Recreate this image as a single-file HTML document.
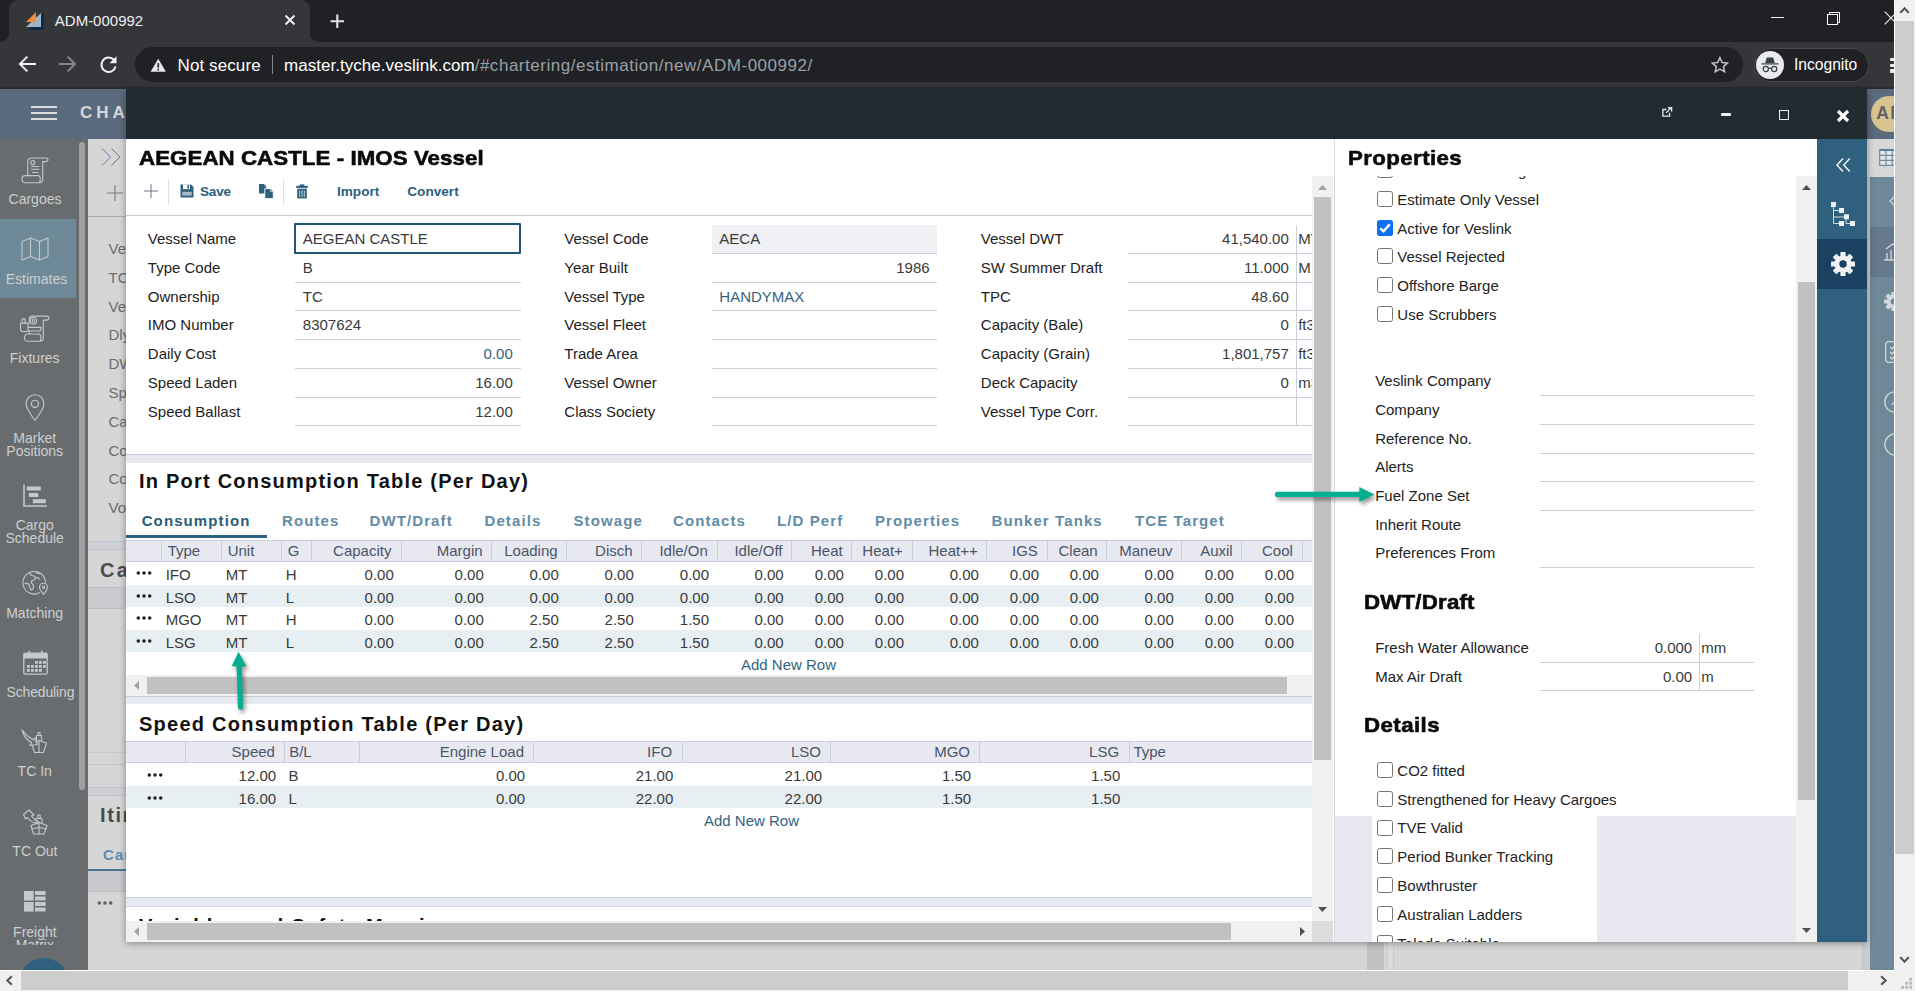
<!DOCTYPE html>
<html>
<head>
<meta charset="utf-8">
<title>ADM-000992</title>
<style>
*{box-sizing:border-box;margin:0;padding:0}
html,body{width:1915px;height:991px;overflow:hidden;background:#d6d6d6;font-family:"Liberation Sans",sans-serif;font-size:15px;color:#222}
.abs,.abs *{position:absolute}
.abs{left:0;top:0}
.t{white-space:pre;line-height:1}
svg{position:absolute;overflow:visible}
/* browser chrome */
#tabstrip{left:0;top:0;width:1894px;height:42px;background:#202124}
#tab{left:9px;top:0;width:301px;height:42px;background:#35363a;border-radius:9px 9px 0 0}
#addr{left:0;top:41px;width:1894px;height:48px;background:#35363a}
#pill{left:135px;top:6px;width:1608px;height:35px;border-radius:18px;background:#202124}
#incog{left:1754.3px;top:6.5px;width:115px;height:34px;border-radius:17px;background:#202124;border:1px solid #46484c}
/* app */
#apphead{left:0;top:89px;width:1894px;height:50px;background:#5a6b7d}
#side{left:0;top:139px;width:88px;height:831px;background:#696c6e;overflow:hidden}
#side .t{color:#cdcfd0;font-size:14px;text-align:center;width:88px;left:0}
#bg{left:88px;top:139px;width:1806px;height:831px;background:#d6d6d6;overflow:hidden}
/* modal */
#modal{left:126px;top:89px;width:1741px;height:853px;background:#fff;box-shadow:0 1px 7px rgba(0,0,0,.4)}
#mtitle{left:0;top:0;width:1741px;height:50px;background:#222a32}
#mright{left:1691px;top:50px;width:50px;height:803px;background:#2f607d}

.h1{font-size:21px;font-weight:bold;color:#0a0a0a;-webkit-text-stroke:.6px #0a0a0a;transform:scaleX(1.061);transform-origin:0 0}
.h2{font-size:20px;font-weight:bold;color:#111}
.tb{font-size:13.6px;font-weight:bold;color:#2c5f7c}
.v{color:#3a3a3a}
.lnk{color:#34647f}
.th{color:#4a5568}
.tab{font-size:15px;font-weight:bold;letter-spacing:1.1px;color:#628ca6}
.tab.act{color:#2a5d7a}
.dots{font-size:19px;letter-spacing:-1px;color:#222;line-height:1}
#lp .t{font-size:15px}
#lp .t.h1{font-size:21px;font-weight:bold;color:#0a0a0a;-webkit-text-stroke:.6px #0a0a0a;transform:scaleX(1.061);transform-origin:0 0}#lp .t.h2{font-size:20px}#lp .t.tb{font-size:13.6px}#lp .t.dots{font-size:19px}

.h3{font-size:21px;font-weight:bold;color:#0a0a0a;-webkit-text-stroke:.6px #0a0a0a;transform:scaleX(1.06);transform-origin:0 0}
#rp .t{font-size:15px}
#rp .t.h3{font-size:21px;font-weight:bold;color:#0a0a0a;-webkit-text-stroke:.6px #0a0a0a;transform:scaleX(1.06);transform-origin:0 0}
/* scrollbars */
#vsb{left:1894px;top:0;width:21px;height:971px;background:#f0f0f0;border-left:1px solid #fff}
#hsb{left:0;top:970px;width:1915px;height:21px;background:#f0f0f0;border-top:1px solid #fff}
</style>
</head>
<body>
<div class="abs" id="root">

<!-- ===== browser chrome ===== -->
<div id="tabstrip">
  <div id="tab"></div>
  <div style="left:1px;top:33px;width:8px;height:9px;background:radial-gradient(circle at 0 0,#202124 8px,#35363a 8.5px)"></div>
  <div style="left:310px;top:33px;width:8px;height:9px;background:radial-gradient(circle at 100% 0,#202124 8px,#35363a 8.5px)"></div>
  <!-- favicon -->
  <svg style="left:24px;top:11px" width="22" height="20" viewBox="0 0 22 20">
    <polygon points="20,1 20,19 4,19" fill="#0f2a4a"/>
    <polygon points="17,2 17,16 2,16" fill="#9fb4c4"/>
    <polygon points="12,1 12,11 2,11" fill="#f08a3c"/>
  </svg>
  <div class="t" style="left:54.8px;top:13px;font-size:15px;color:#eceef0">ADM-000992</div>
  <svg style="left:284px;top:14px" width="12" height="12" viewBox="0 0 12 12"><path d="M1.5 1.5L10.5 10.5M10.5 1.5L1.5 10.5" stroke="#f1f3f4" stroke-width="1.9" fill="none"/></svg>
  <svg style="left:330.3px;top:13.5px" width="14.6" height="14.6" viewBox="0 0 14 14"><path d="M7 0.5V13.5M0.5 7H13.5" stroke="#e2e4e6" stroke-width="2" fill="none"/></svg>
  <!-- window controls -->
  <div style="left:1771px;top:17px;width:13px;height:1px;background:#f1f1f1"></div>
  <svg style="left:1826px;top:11px" width="15" height="15" viewBox="0 0 15 15"><path d="M3.5 3.5V1.5H13.5V11.5H11.5" stroke="#fff" stroke-width="1" fill="none"/><rect x="1.5" y="3.5" width="10" height="10" stroke="#fff" stroke-width="1" fill="none"/></svg>
  <svg style="left:1884px;top:11px" width="14" height="14" viewBox="0 0 14 14"><path d="M0.7 0.7L13.3 13.3M13.3 0.7L0.7 13.3" stroke="#f1f1f1" stroke-width="1.1" fill="none"/></svg>
</div>
<div id="addr">
  <div style="left:0;top:0;width:2px;height:.8px;background:#202124"></div>
  <div style="left:318px;top:0;width:1576px;height:.8px;background:#202124"></div>
  <div style="left:0;top:46px;width:1894px;height:2px;background:#2a2b2e"></div>
  <!-- nav icons -->
  <svg style="left:18px;top:14px" width="19" height="18" viewBox="0 0 19 18"><path d="M18 9H2.5M9.3 1.6L2 9L9.3 16.4" stroke="#f1f3f4" stroke-width="2" fill="none"/></svg>
  <svg style="left:58px;top:14px" width="19" height="18" viewBox="0 0 19 18"><path d="M1 9H16.5M9.7 1.6L17 9L9.7 16.4" stroke="#85888c" stroke-width="2" fill="none"/></svg>
  <svg style="left:99px;top:14px" width="19" height="19" viewBox="0 0 19 19"><path d="M15.2 5.2A7.2 7.2 0 1 0 16.6 11.5" stroke="#f1f3f4" stroke-width="2" fill="none"/><polygon points="17.5,1.2 17.5,8.2 10.5,8.2" fill="#f1f3f4"/></svg>
  <div id="pill"></div>
  <svg style="left:149.5px;top:17px" width="16.5" height="14.6" viewBox="0 0 18 16"><path d="M9 0.8L17.4 15.2H0.6Z" fill="#e8eaed"/><rect x="8.1" y="5.6" width="1.8" height="5" fill="#202124"/><rect x="8.1" y="11.8" width="1.8" height="1.8" fill="#202124"/></svg>
  <div class="t" style="left:177.5px;top:16px;font-size:17px;letter-spacing:.1px;color:#fff">Not secure</div>
  <div style="left:271.5px;top:14px;width:1.5px;height:19px;background:#84878b"></div>
  <div class="t" style="left:284px;top:16px;font-size:17px;letter-spacing:.53px;color:#9aa0a6"><span style="position:static;color:#fff;letter-spacing:.03px">master.tyche.veslink.com</span>/#chartering/estimation/new/ADM-000992/</div>
  <svg style="left:1711px;top:14.6px" width="17.8" height="16.9" viewBox="0 0 20 19"><path d="M10 1.8L12.5 7.3L18.5 7.9L14 11.9L15.3 17.8L10 14.7L4.7 17.8L6 11.9L1.5 7.9L7.5 7.3Z" stroke="#bdc1c6" stroke-width="1.7" fill="none" stroke-linejoin="miter"/></svg>
  <div id="incog"></div>
  <div style="left:1756px;top:9.7px;width:28px;height:28px;border-radius:14px;background:#e8eaed"></div>
  <svg style="left:1760px;top:13.7px" width="20" height="20" viewBox="0 0 20 20"><path d="M5.2 8L6.8 2.6H13.2L14.8 8Z" fill="#3c4043"/><rect x="1.5" y="8.3" width="17" height="1.2" fill="#3c4043"/><circle cx="5.8" cy="14" r="2.6" stroke="#3c4043" stroke-width="1.2" fill="none"/><circle cx="14.2" cy="14" r="2.6" stroke="#3c4043" stroke-width="1.2" fill="none"/><path d="M8.4 13.6Q10 12.6 11.6 13.6" stroke="#3c4043" stroke-width="1.1" fill="none"/></svg>
  <div class="t" style="left:1794px;top:16px;font-size:15.6px;color:#fff">Incognito</div>
  <div style="left:1890px;top:16.6px;width:4px;height:3.4px;background:#e8eaed;border-radius:1px 0 0 1px"></div>
  <div style="left:1890px;top:22.5px;width:4px;height:3.4px;background:#e8eaed;border-radius:1px 0 0 1px"></div>
  <div style="left:1890px;top:28.4px;width:4px;height:3.4px;background:#e8eaed;border-radius:1px 0 0 1px"></div>
</div>

<!-- ===== app header ===== -->
<div id="apphead">
  <div style="left:31px;top:17px;width:26px;height:2px;background:#dcdddf"></div>
  <div style="left:31px;top:23px;width:26px;height:2px;background:#d9dbdd"></div>
  <div style="left:31px;top:29px;width:26px;height:2px;background:#dcdddf"></div>
  <div class="t" style="left:80px;top:15px;font-size:17px;font-weight:bold;letter-spacing:3.95px;color:#d6d8db">CHARTERING</div>
  <!-- avatar (right of modal) -->
  <div style="left:1871px;top:6.7px;width:36.5px;height:36.5px;border-radius:19px;background:#d8c48e"></div>
  <div class="t" style="left:1876.3px;top:16px;font-size:17.5px;font-weight:bold;letter-spacing:1.4px;color:#626266">AD</div>
</div>

<!-- ===== sidebar ===== -->
<div id="side">
  <div style="left:0;top:80px;width:76px;height:79px;background:#6e8998"></div>
  <div style="left:79px;top:2.7px;width:6px;height:648px;border-radius:3px;background:#a1a1a1"></div>
  <div id="sideitems" style="left:0;top:0;width:88px;height:806px;overflow:hidden">
  <!-- Cargoes -->
  <svg style="left:21px;top:18px" width="28" height="27" viewBox="0 0 28 27"><g stroke="#c6c8c9" stroke-width="1.1" fill="none" stroke-linejoin="round" stroke-linecap="round"><path d="M6.8 18.6V4.5Q6.8 1 10.3 1H24.5Q27 1 27 2.8Q27 4.6 24.5 4.6H21.7V22.2Q21.7 25.7 18.2 25.7H4.5Q1 25.7 1 22.2Q1 18.6 4.5 18.6H17.5Q19.3 19.2 19.3 22.2Q19.3 25 17.8 25.7"/><path d="M10.5 9.5H18M10.5 12.3H18M11.5 15.5H17"/><circle cx="11.8" cy="5.6" r="2"/></g></svg>
  <div class="t" style="top:53px;left:-9px">Cargoes</div>
  <!-- Estimates -->
  <svg style="left:21px;top:98px" width="28" height="24" viewBox="0 0 28 24"><g stroke="#c6c8c9" stroke-width="1.1" fill="none" stroke-linejoin="round" stroke-linecap="round"><path d="M1 4.5L9.5 1L18.5 4.5L27 1V19.5L18.5 23L9.5 19.5L1 23Z"/><path d="M9.5 1V19.5M18.5 4.5V23"/></g></svg>
  <div class="t" style="top:133px;left:-7.5px">Estimates</div>
  <!-- Fixtures -->
  <svg style="left:20px;top:176px" width="30" height="28" viewBox="0 0 30 28"><g stroke="#c6c8c9" stroke-width="1.1" fill="none" stroke-linejoin="round" stroke-linecap="round"><path d="M9.3 8V4.4Q9.3 1.1 12.6 1.1H26.5Q28.9 1.1 28.9 3.1Q28.9 5.1 26.5 5.1H23.3V22.8Q23.3 26.3 19.8 26.3H8Q4.5 26.3 4.5 22.7Q4.5 19 8 19H19Q21 19.6 21 22.7Q21 25.5 19.4 26.3"/><path d="M9.3 16.5V19"/><path d="M2.1 8.1V3.9H5.1V8.1M8.1 12.4H21.2M8.1 16H19.5Q21.3 15.6 21.2 12.4"/><path d="M0.5 8.1H8.1V16Q7 16.6 3.6 16.6Q0.5 16.4 0.5 13.4Z"/><circle cx="13.4" cy="5.8" r="3.3"/><circle cx="13.4" cy="5.8" r="1.3"/></g></svg>
  <div class="t" style="top:212px;left:-9.3px">Fixtures</div>
  <!-- Market Positions -->
  <svg style="left:25px;top:255px" width="20" height="28" viewBox="0 0 20 28"><g stroke="#c6c8c9" stroke-width="1.1" fill="none" stroke-linejoin="round" stroke-linecap="round"><path d="M10 26.5Q1 14.5 1 9.8A9 9 0 0 1 19 9.8Q19 14.5 10 26.5Z"/><circle cx="10" cy="9.8" r="3.6"/></g></svg>
  <div class="t" style="top:293px;left:-9.3px;line-height:13px">Market<br>Positions</div>
  <!-- Cargo Schedule -->
  <svg style="left:23px;top:345px" width="24" height="23" viewBox="0 0 24 23"><path d="M1 0.5V22H24" stroke="#c6c8c9" stroke-width="1.6" fill="none"/><rect x="3.8" y="2.5" width="14" height="4" fill="#c6c8c9"/><rect x="5.8" y="9" width="9.5" height="4" fill="#c6c8c9"/><rect x="9.8" y="15.2" width="13" height="4" fill="#c6c8c9"/></svg>
  <div class="t" style="top:379.5px;left:-9.3px;line-height:13px">Cargo<br>Schedule</div>
  <!-- Matching -->
  <svg style="left:22px;top:431px" width="27" height="26" viewBox="0 0 27 26"><g stroke="#c6c8c9" stroke-width="1.1" fill="none" stroke-linejoin="round" stroke-linecap="round"><path d="M17.5 22.8A11.3 11.3 0 1 1 23.5 12"/><path d="M8 2.5Q7.5 5 10 5.5Q13 5.5 13.5 8Q13 10.5 10 10.5Q8.5 13 10.5 14Q12 15 11.5 17.5Q11 19.5 9 20Q7 17 7 14.5Q5 13 3 13.5"/><path d="M14 2Q16 4 18.5 3.2M13.5 8Q16 7 17.5 9"/><path d="M21.5 24.5Q17.5 19.5 17.5 17.3A4 4 0 0 1 25.5 17.3Q25.5 19.5 21.5 24.5Z"/><circle cx="21.5" cy="17.2" r="1.2"/></g></svg>
  <div class="t" style="top:467px;left:-9.4px">Matching</div>
  <!-- Scheduling -->
  <svg style="left:23px;top:511px" width="25" height="25" viewBox="0 0 25 25"><rect x="0.8" y="3.2" width="23.4" height="21" rx="1.5" stroke="#c6c8c9" stroke-width="1.3" fill="none"/><rect x="0.8" y="3.2" width="23.4" height="5.3" fill="#c6c8c9"/><path d="M6.2 0.5V5.5M18.8 0.5V5.5" stroke="#c6c8c9" stroke-width="1.5"/><g fill="#c6c8c9"><rect x="12" y="11" width="2.8" height="2.8"/><rect x="16" y="11" width="2.8" height="2.8"/><rect x="20" y="11" width="2.8" height="2.8"/><rect x="4" y="15" width="2.8" height="2.8"/><rect x="8" y="15" width="2.8" height="2.8"/><rect x="12" y="15" width="2.8" height="2.8"/><rect x="16" y="15" width="2.8" height="2.8"/><rect x="20" y="15" width="2.8" height="2.8"/><rect x="4" y="19" width="2.8" height="2.8"/><rect x="8" y="19" width="2.8" height="2.8"/><rect x="12" y="19" width="2.8" height="2.8"/><rect x="16" y="19" width="2.8" height="2.8"/></g></svg>
  <div class="t" style="top:545.5px;left:6.5px;width:auto;text-align:left;letter-spacing:-.15px">Scheduling</div>
  <!-- TC In -->
  <svg style="left:21px;top:590px" width="27" height="25" viewBox="0 0 27 25"><g stroke="#c6c8c9" stroke-width="1.1" fill="none" stroke-linejoin="round" stroke-linecap="round"><path d="M1 1Q3 9 10.5 13.5L9 16.5L16.5 15.5L14 8.5L12.5 11Q6 7.5 1 1Z"/><path d="M11 16L13.5 23.5H22.5L25.5 14L18 11.5L14.5 12.6"/><path d="M18 11.5V23.5M15.5 11V6.5H20.5V11.5M17 6.5V3.5H19V6.5"/></g></svg>
  <div class="t" style="top:625px;left:-9.3px">TC In</div>
  <!-- TC Out -->
  <svg style="left:22px;top:670px" width="27" height="26" viewBox="0 0 27 26"><g stroke="#c6c8c9" stroke-width="1.1" fill="none" stroke-linejoin="round" stroke-linecap="round"><path d="M1.5 5.5L7 1L12 6L9.5 7Q12 11 16.5 12.5L15.5 15Q8.5 13 5.5 8.5L3.5 10Z"/><path d="M9.5 18L11.5 25H22L25 16.5L17 13.5L9 16.5Z"/><path d="M17 13.5V25M14 14.5V9.5H20V14.5M16 9.5V6H18.2V9.5"/><path d="M10 20Q17 17.5 24 20"/></g></svg>
  <div class="t" style="top:704.5px;left:-9.1px">TC Out</div>
  <!-- Freight Matrix -->
  <svg style="left:24px;top:752px" width="22" height="21" viewBox="0 0 22 21"><g fill="#c6c8c9"><rect x="0" y="0" width="9.6" height="9.6"/><rect x="0" y="11" width="9.6" height="9.6"/><rect x="11" y="0" width="10.6" height="4"/><rect x="11" y="5.5" width="10.6" height="4"/><rect x="11" y="11" width="10.6" height="4"/><rect x="11" y="16.5" width="10.6" height="4"/></g></svg>
  <div class="t" style="top:787px;left:-9.1px;line-height:13px">Freight<br>Matrix</div>
  </div>
  <div style="left:19px;top:818.5px;width:50px;height:50px;border-radius:25px;background:#2e6080"></div>
</div>

<!-- ===== page background ===== -->
<div id="bg">
  <div id="bgin" style="left:0;top:0;width:40px;height:831px;overflow:hidden;color:#6a6d71">
    <svg style="left:13.4px;top:9px" width="20" height="18" viewBox="0 0 20 18"><path d="M1 0.5L9.5 9L1 17.5M10.4 0.5L18.9 9L10.4 17.5" stroke="#5d7c9b" stroke-width="1" fill="none"/></svg>
    <svg style="left:19px;top:46px" width="16" height="16" viewBox="0 0 16 16"><path d="M8 0V16M0 8H16" stroke="#767c87" stroke-width="1.2" fill="none"/></svg>
    <div style="left:0;top:77px;width:40px;height:1px;background:#a6b1bd"></div>
    <div class="t" style="left:20.5px;top:102px">Vessel</div>
    <div class="t" style="left:20.5px;top:130.5px">TCE</div>
    <div class="t" style="left:20.5px;top:159.5px">Vessel</div>
    <div class="t" style="left:20.5px;top:188px">Dly</div>
    <div class="t" style="left:20.5px;top:217px">DWT</div>
    <div class="t" style="left:20.5px;top:246px">Speed</div>
    <div class="t" style="left:20.5px;top:274.5px">Cargo</div>
    <div class="t" style="left:20.5px;top:303.5px">Comm</div>
    <div class="t" style="left:20.5px;top:332px">Comm</div>
    <div class="t" style="left:20.5px;top:360.5px">Voy</div>
    <div style="left:0;top:402px;width:40px;height:1px;background:#c0c4cc"></div>
    <div style="left:0;top:403px;width:40px;height:7px;background:#cfcfd5"></div>
    <div style="left:0;top:410px;width:40px;height:1px;background:#c0c4cc"></div>
    <div class="t" style="left:12px;top:421px;font-size:20px;font-weight:bold;letter-spacing:2.4px;color:#4a4d50">Cargo</div>
    <div style="left:0;top:448px;width:40px;height:22px;background:#cbcbd0;border-top:1px solid #bcbfc6;border-bottom:1px solid #bcbfc6"></div>
    <div style="left:0;top:612.5px;width:40px;height:1px;background:#c3c6cd"></div>
    <div style="left:0;top:624.5px;width:40px;height:1px;background:#c3c6cd"></div>
    <div style="left:0;top:648px;width:40px;height:1px;background:#c0c4cc"></div>
    <div style="left:0;top:649px;width:40px;height:7px;background:#cfcfd5"></div>
    <div style="left:0;top:656px;width:40px;height:1px;background:#c0c4cc"></div>
    <div class="t" style="left:12px;top:666px;font-size:20px;font-weight:bold;letter-spacing:1.6px;color:#4a4d50">Itinerary</div>
    <div class="t" style="left:15px;top:708px;font-size:15px;font-weight:bold;letter-spacing:1.1px;color:#6189ab">Cargo</div>
    <div style="left:0;top:730px;width:40px;height:2px;background:#4f7591"></div>
    <div style="left:0;top:732px;width:40px;height:21px;background:#c9c9cd;border-bottom:1px solid #bcbfc6"></div>
    <svg style="left:9px;top:762.3px" width="16" height="4" viewBox="0 0 16 4"><g fill="#5b5e62"><circle cx="2.3" cy="2" r="1.75"/><circle cx="8" cy="2" r="1.75"/><circle cx="13.7" cy="2" r="1.75"/></g></svg>
  </div>
  <div style="left:1279px;top:803px;width:17px;height:28px;background:#c1c1c1"></div>
  <div style="left:1299px;top:803px;width:7px;height:28px;background:#dbdbdf;border-left:1px solid #c6cad4;border-right:1px solid #c6cad4"></div>
  <div style="left:1774px;top:803px;width:6px;height:28px;background:#cacace;border-left:1px solid #c0c4cc"></div>
  <!-- strip right of modal -->
  <div style="left:1779px;top:0;width:27px;height:831px;background:#cbcbce"></div>
  <div style="left:1779px;top:0;width:27px;height:38px;background:#d7d7d7"></div>
  <div style="left:1782px;top:38px;width:24px;height:793px;background:#6f8897"></div>
  <div style="left:1782px;top:88px;width:24px;height:50px;background:#66788c"></div>
  <svg style="left:1791px;top:10px" width="18" height="17" viewBox="0 0 18 17"><rect x="0.6" y="0.3" width="18" height="16.4" fill="#e7e7e7"/><path d="M0.2 1H18" stroke="#5b8091" stroke-width="2"/><path d="M0.7 0.7V16.3H18M0.7 6.3H18M0.7 11.4H18M7 1V16.3M13.2 1V16.3" stroke="#6d8a9e" stroke-width="1.2" fill="none"/></svg>
  <svg style="left:1801px;top:55px" width="8" height="14" viewBox="0 0 8 14"><path d="M7.5 0.5L1 7L7.5 13.5" stroke="#d3d7da" stroke-width="1.3" fill="none"/></svg>
  <svg style="left:1796px;top:104px" width="14" height="18" viewBox="0 0 14 18"><path d="M0 17H14M3 17V10M7 17V7M11 17V4M2 6L9 0.8L13 4" stroke="#d3d7da" stroke-width="1.3" fill="none"/></svg>
  <svg style="left:1796px;top:153px" width="19" height="19" viewBox="-9.5 -9.5 19 19"><g fill="#d3d7da"><circle r="6.8"/><rect x="-2.1" y="-9.5" width="4.2" height="4" rx="0.5"/><rect transform="rotate(45)" x="-2.1" y="-9.5" width="4.2" height="4" rx="0.5"/><rect transform="rotate(90)" x="-2.1" y="-9.5" width="4.2" height="4" rx="0.5"/><rect transform="rotate(135)" x="-2.1" y="-9.5" width="4.2" height="4" rx="0.5"/><rect transform="rotate(180)" x="-2.1" y="-9.5" width="4.2" height="4" rx="0.5"/><rect transform="rotate(225)" x="-2.1" y="-9.5" width="4.2" height="4" rx="0.5"/><rect transform="rotate(270)" x="-2.1" y="-9.5" width="4.2" height="4" rx="0.5"/><rect transform="rotate(315)" x="-2.1" y="-9.5" width="4.2" height="4" rx="0.5"/></g><circle r="2.9" fill="#6f8897"/></svg>
  <svg style="left:1797px;top:201.5px" width="20" height="22" viewBox="0 0 20 22"><rect x="0.7" y="0.7" width="18" height="20.6" rx="3" stroke="#d3d7da" stroke-width="1.3" fill="none"/><path d="M5 6L7 8L10 4.5M5 11L7 13L10 9.5M5 16L7 18L10 14.5" stroke="#d3d7da" stroke-width="1.3" fill="none"/></svg>
  <svg style="left:1795.6px;top:252px" width="22" height="22" viewBox="0 0 22 22"><circle cx="11" cy="11" r="10.2" stroke="#d3d7da" stroke-width="1.3" fill="none"/><path d="M11 5V11L7.5 13.5" stroke="#d3d7da" stroke-width="1.3" fill="none"/></svg>
  <svg style="left:1796px;top:294px" width="23" height="23" viewBox="0 0 23 23"><circle cx="11.5" cy="11.5" r="10.7" stroke="#d3d7da" stroke-width="1.3" fill="none"/></svg>
</div>

<!-- ===== modal ===== -->
<div id="modal">
  <div id="mtitle"></div>
<!--LEFT-->
<div id="lp" style="left:0;top:50px;width:1186px;height:782px;overflow:hidden;background:#fff">
<div class="t h1" style="left:13px;top:7.5px;letter-spacing:.06px">AEGEAN CASTLE - IMOS Vessel</div>
<svg style="left:18px;top:45px" width="14" height="14" viewBox="0 0 14 14"><path d="M7 0V14M0 7H14" stroke="#6d7480" stroke-width="1" fill="none"/></svg>
<div style="left:42px;top:40px;width:1px;height:25px;background:#dce0e7"></div>
<svg style="left:54px;top:45px" width="14" height="14" viewBox="0 0 14 14"><path d="M0.5 0.5H11L13.5 3V13.5H0.5Z" fill="#2f607d"/><rect x="3" y="0.5" width="7" height="4.6" fill="#fff"/><rect x="7.3" y="1.2" width="1.8" height="3.2" fill="#2f607d"/><rect x="2.2" y="7.8" width="9.6" height="3.8" fill="#a9b7c2"/></svg>
<div class="t tb" style="left:74px;top:45.7px;letter-spacing:-.25px">Save</div>
<svg style="left:133px;top:44.5px" width="15" height="15" viewBox="0 0 15 15"><path d="M0 0H5.2L7.2 2V9.5H0Z" fill="#2f607d"/><path d="M5 3.5H5.2V0.3L7 2.2H5.2" fill="#9fb6c4"/><path d="M5.8 4.6H11.6L14.3 7.3V14.6H5.8Z" fill="#2f607d" stroke="#fff" stroke-width="0.9"/><path d="M11.4 4.9V7.5H14" fill="none" stroke="#cfdbe2" stroke-width="0.8"/></svg>
<div style="left:157px;top:40px;width:1px;height:25px;background:#dce0e7"></div>
<svg style="left:169.5px;top:44.5px" width="12" height="15" viewBox="0 0 13 16"><rect x="4" y="0.3" width="5" height="2" fill="#2f607d"/><rect x="0.3" y="1.8" width="12.4" height="2.3" fill="#2f607d"/><path d="M1.3 5H11.7V15.5H1.3Z" fill="#2f607d"/><path d="M4 6.8V13.8M6.5 6.8V13.8M9 6.8V13.8" stroke="#cddae2" stroke-width="1"/></svg>
<div class="t tb" style="left:211px;top:45.7px;">Import</div>
<div class="t tb" style="left:281.3px;top:45.7px;">Convert</div>
<div style="left:0px;top:76px;width:1186px;height:1px;background:#c3cbd8"></div>
<div class="t " style="left:21.8px;top:92px;">Vessel Name</div>
<div class="t v" style="left:176.8px;top:92px;">AEGEAN CASTLE</div>
<div class="t " style="left:21.8px;top:121px;">Type Code</div>
<div class="t v" style="left:176.8px;top:121px;">B</div>
<div style="left:169px;top:143px;width:225.5px;height:1px;background:#c9d0db"></div>
<div class="t " style="left:21.8px;top:150px;">Ownership</div>
<div class="t v" style="left:176.8px;top:150px;">TC</div>
<div style="left:169px;top:171px;width:225.5px;height:1px;background:#c9d0db"></div>
<div class="t " style="left:21.8px;top:178px;">IMO Number</div>
<div class="t v" style="left:176.8px;top:178px;">8307624</div>
<div style="left:169px;top:200px;width:225.5px;height:1px;background:#c9d0db"></div>
<div class="t " style="left:21.8px;top:207px;">Daily Cost</div>
<div class="t lnk" style="right:799.2px;top:207px;">0.00</div>
<div style="left:169px;top:229px;width:225.5px;height:1px;background:#c9d0db"></div>
<div class="t " style="left:21.8px;top:236px;">Speed Laden</div>
<div class="t v" style="right:799.2px;top:236px;">16.00</div>
<div style="left:169px;top:258px;width:225.5px;height:1px;background:#c9d0db"></div>
<div class="t " style="left:21.8px;top:265px;">Speed Ballast</div>
<div class="t v" style="right:799.2px;top:265px;">12.00</div>
<div style="left:169px;top:286px;width:225.5px;height:1px;background:#c9d0db"></div>
<div style="left:168px;top:84px;width:227px;height:31px;border:2px solid #1f5575;border-radius:1px"></div>
<div style="left:586px;top:86px;width:225px;height:28px;background:#eff0f3"></div>
<div class="t " style="left:438.3px;top:92px;">Vessel Code</div>
<div style="left:586px;top:114px;width:225px;height:1px;background:#c9d0db"></div>
<div class="t " style="left:438.3px;top:121px;">Year Built</div>
<div style="left:586px;top:143px;width:225px;height:1px;background:#c9d0db"></div>
<div class="t " style="left:438.3px;top:150px;">Vessel Type</div>
<div style="left:586px;top:171px;width:225px;height:1px;background:#c9d0db"></div>
<div class="t " style="left:438.3px;top:178px;">Vessel Fleet</div>
<div style="left:586px;top:200px;width:225px;height:1px;background:#c9d0db"></div>
<div class="t " style="left:438.3px;top:207px;">Trade Area</div>
<div style="left:586px;top:229px;width:225px;height:1px;background:#c9d0db"></div>
<div class="t " style="left:438.3px;top:236px;">Vessel Owner</div>
<div style="left:586px;top:258px;width:225px;height:1px;background:#c9d0db"></div>
<div class="t " style="left:438.3px;top:265px;">Class Society</div>
<div style="left:586px;top:286px;width:225px;height:1px;background:#c9d0db"></div>
<div class="t v" style="left:593.3px;top:92px;">AECA</div>
<div class="t v" style="right:382.4px;top:121px;">1986</div>
<div class="t lnk" style="left:593.3px;top:150px;">HANDYMAX</div>
<div class="t " style="left:854.8px;top:92px;">Vessel DWT</div>
<div style="left:1002px;top:114px;width:184px;height:1px;background:#c9d0db"></div>
<div class="t v" style="right:23.2px;top:92px;">41,540.00</div>
<div class="t v" style="left:1172.2px;top:92px;">MT</div>
<div class="t " style="left:854.8px;top:121px;">SW Summer Draft</div>
<div style="left:1002px;top:143px;width:184px;height:1px;background:#c9d0db"></div>
<div class="t v" style="right:23.2px;top:121px;">11.000</div>
<div class="t v" style="left:1172.2px;top:121px;">M</div>
<div class="t " style="left:854.8px;top:150px;">TPC</div>
<div style="left:1002px;top:171px;width:184px;height:1px;background:#c9d0db"></div>
<div class="t v" style="right:23.2px;top:150px;">48.60</div>
<div class="t " style="left:854.8px;top:178px;">Capacity (Bale)</div>
<div style="left:1002px;top:200px;width:184px;height:1px;background:#c9d0db"></div>
<div class="t v" style="right:23.2px;top:178px;">0</div>
<div class="t v" style="left:1172.2px;top:178px;">ft3</div>
<div class="t " style="left:854.8px;top:207px;">Capacity (Grain)</div>
<div style="left:1002px;top:229px;width:184px;height:1px;background:#c9d0db"></div>
<div class="t v" style="right:23.2px;top:207px;">1,801,757</div>
<div class="t v" style="left:1172.2px;top:207px;">ft3</div>
<div class="t " style="left:854.8px;top:236px;">Deck Capacity</div>
<div style="left:1002px;top:258px;width:184px;height:1px;background:#c9d0db"></div>
<div class="t v" style="right:23.2px;top:236px;">0</div>
<div class="t v" style="left:1172.2px;top:236px;">m3</div>
<div class="t " style="left:854.8px;top:265px;">Vessel Type Corr.</div>
<div style="left:1002px;top:286px;width:184px;height:1px;background:#c9d0db"></div>
<div style="left:1170px;top:86px;width:1px;height:200px;background:#c9d0db"></div>
<div style="left:0;top:315px;width:1186px;height:9px;background:#e8e8f1;border-top:1px solid #c6cedb;"></div>
<div class="t h2" style="left:13px;top:332px;letter-spacing:1.22px">In Port Consumption Table (Per Day)</div>
<div class="t tab act" style="left:15.7px;top:374px;">Consumption</div>
<div class="t tab" style="left:156px;top:374px;">Routes</div>
<div class="t tab" style="left:243.5px;top:374px;">DWT/Draft</div>
<div class="t tab" style="left:358.5px;top:374px;">Details</div>
<div class="t tab" style="left:447.5px;top:374px;">Stowage</div>
<div class="t tab" style="left:547px;top:374px;">Contacts</div>
<div class="t tab" style="left:651px;top:374px;">L/D Perf</div>
<div class="t tab" style="left:749px;top:374px;">Properties</div>
<div class="t tab" style="left:865.5px;top:374px;">Bunker Tanks</div>
<div class="t tab" style="left:1009px;top:374px;">TCE Target</div>
<div style="left:0;top:396px;width:141px;height:3px;background:#2a6283"></div>
<div style="left:0;top:401px;width:1186px;height:22px;background:#e8e8f1;border-top:1px solid #c9d0db;border-bottom:1px solid #c9d0db"></div>
<div style="left:35.3px;top:402px;width:1px;height:20px;background:#c9d0db"></div>
<div style="left:95.3px;top:402px;width:1px;height:20px;background:#c9d0db"></div>
<div style="left:155.3px;top:402px;width:1px;height:20px;background:#c9d0db"></div>
<div style="left:185.3px;top:402px;width:1px;height:20px;background:#c9d0db"></div>
<div style="left:275.3px;top:402px;width:1px;height:20px;background:#c9d0db"></div>
<div style="left:365.3px;top:402px;width:1px;height:20px;background:#c9d0db"></div>
<div style="left:440.3px;top:402px;width:1px;height:20px;background:#c9d0db"></div>
<div style="left:515.3px;top:402px;width:1px;height:20px;background:#c9d0db"></div>
<div style="left:590.5px;top:402px;width:1px;height:20px;background:#c9d0db"></div>
<div style="left:665.2px;top:402px;width:1px;height:20px;background:#c9d0db"></div>
<div style="left:725.4px;top:402px;width:1px;height:20px;background:#c9d0db"></div>
<div style="left:785.5px;top:402px;width:1px;height:20px;background:#c9d0db"></div>
<div style="left:860.4px;top:402px;width:1px;height:20px;background:#c9d0db"></div>
<div style="left:920.5px;top:402px;width:1px;height:20px;background:#c9d0db"></div>
<div style="left:980.4px;top:402px;width:1px;height:20px;background:#c9d0db"></div>
<div style="left:1055.3px;top:402px;width:1px;height:20px;background:#c9d0db"></div>
<div style="left:1115.4px;top:402px;width:1px;height:20px;background:#c9d0db"></div>
<div style="left:1175.5px;top:402px;width:1px;height:20px;background:#c9d0db"></div>
<div style="left:0;top:446px;width:1186px;height:22px;background:#e8eff2"></div>
<div style="left:0;top:490.5px;width:1186px;height:22.5px;background:#e8eff2"></div>
<div class="t th" style="left:41.7px;top:404px;">Type</div>
<div class="t th" style="left:101.7px;top:404px;">Unit</div>
<div class="t th" style="left:161.7px;top:404px;">G</div>
<div class="t th" style="right:920.6px;top:404px;">Capacity</div>
<div class="t th" style="right:829.4px;top:404px;">Margin</div>
<div class="t th" style="right:754.4px;top:404px;">Loading</div>
<div class="t th" style="right:679.4px;top:404px;">Disch</div>
<div class="t th" style="right:604.2px;top:404px;">Idle/On</div>
<div class="t th" style="right:529.5px;top:404px;">Idle/Off</div>
<div class="t th" style="right:469.3px;top:404px;">Heat</div>
<div class="t th" style="right:409.2px;top:404px;">Heat+</div>
<div class="t th" style="right:334.3px;top:404px;">Heat++</div>
<div class="t th" style="right:274.2px;top:404px;">IGS</div>
<div class="t th" style="right:214.3px;top:404px;">Clean</div>
<div class="t th" style="right:139.4px;top:404px;">Maneuv</div>
<div class="t th" style="right:79.3px;top:404px;">Auxil</div>
<div class="t th" style="right:19.2px;top:404px;">Cool</div>
<svg style="left:9.6px;top:432px" width="16" height="4" viewBox="0 0 16 4"><g fill="#1c1c1c"><circle cx="2.3" cy="2" r="1.75"/><circle cx="8" cy="2" r="1.75"/><circle cx="13.7" cy="2" r="1.75"/></g></svg>
<div class="t v" style="left:39.7px;top:428px;">IFO</div>
<div class="t v" style="left:99.7px;top:428px;">MT</div>
<div class="t v" style="left:159.7px;top:428px;">H</div>
<div class="t v" style="right:918.2px;top:428px;">0.00</div>
<div class="t v" style="right:828.2px;top:428px;">0.00</div>
<div class="t v" style="right:753.2px;top:428px;">0.00</div>
<div class="t v" style="right:678.2px;top:428px;">0.00</div>
<div class="t v" style="right:603.0px;top:428px;">0.00</div>
<div class="t v" style="right:528.3px;top:428px;">0.00</div>
<div class="t v" style="right:468.1px;top:428px;">0.00</div>
<div class="t v" style="right:408.0px;top:428px;">0.00</div>
<div class="t v" style="right:333.1px;top:428px;">0.00</div>
<div class="t v" style="right:273.0px;top:428px;">0.00</div>
<div class="t v" style="right:213.1px;top:428px;">0.00</div>
<div class="t v" style="right:138.2px;top:428px;">0.00</div>
<div class="t v" style="right:78.1px;top:428px;">0.00</div>
<div class="t v" style="right:18.0px;top:428px;">0.00</div>
<svg style="left:9.6px;top:455px" width="16" height="4" viewBox="0 0 16 4"><g fill="#1c1c1c"><circle cx="2.3" cy="2" r="1.75"/><circle cx="8" cy="2" r="1.75"/><circle cx="13.7" cy="2" r="1.75"/></g></svg>
<div class="t v" style="left:39.7px;top:451px;">LSO</div>
<div class="t v" style="left:99.7px;top:451px;">MT</div>
<div class="t v" style="left:159.7px;top:451px;">L</div>
<div class="t v" style="right:918.2px;top:451px;">0.00</div>
<div class="t v" style="right:828.2px;top:451px;">0.00</div>
<div class="t v" style="right:753.2px;top:451px;">0.00</div>
<div class="t v" style="right:678.2px;top:451px;">0.00</div>
<div class="t v" style="right:603.0px;top:451px;">0.00</div>
<div class="t v" style="right:528.3px;top:451px;">0.00</div>
<div class="t v" style="right:468.1px;top:451px;">0.00</div>
<div class="t v" style="right:408.0px;top:451px;">0.00</div>
<div class="t v" style="right:333.1px;top:451px;">0.00</div>
<div class="t v" style="right:273.0px;top:451px;">0.00</div>
<div class="t v" style="right:213.1px;top:451px;">0.00</div>
<div class="t v" style="right:138.2px;top:451px;">0.00</div>
<div class="t v" style="right:78.1px;top:451px;">0.00</div>
<div class="t v" style="right:18.0px;top:451px;">0.00</div>
<svg style="left:9.6px;top:477px" width="16" height="4" viewBox="0 0 16 4"><g fill="#1c1c1c"><circle cx="2.3" cy="2" r="1.75"/><circle cx="8" cy="2" r="1.75"/><circle cx="13.7" cy="2" r="1.75"/></g></svg>
<div class="t v" style="left:39.7px;top:473px;">MGO</div>
<div class="t v" style="left:99.7px;top:473px;">MT</div>
<div class="t v" style="left:159.7px;top:473px;">H</div>
<div class="t v" style="right:918.2px;top:473px;">0.00</div>
<div class="t v" style="right:828.2px;top:473px;">0.00</div>
<div class="t v" style="right:753.2px;top:473px;">2.50</div>
<div class="t v" style="right:678.2px;top:473px;">2.50</div>
<div class="t v" style="right:603.0px;top:473px;">1.50</div>
<div class="t v" style="right:528.3px;top:473px;">0.00</div>
<div class="t v" style="right:468.1px;top:473px;">0.00</div>
<div class="t v" style="right:408.0px;top:473px;">0.00</div>
<div class="t v" style="right:333.1px;top:473px;">0.00</div>
<div class="t v" style="right:273.0px;top:473px;">0.00</div>
<div class="t v" style="right:213.1px;top:473px;">0.00</div>
<div class="t v" style="right:138.2px;top:473px;">0.00</div>
<div class="t v" style="right:78.1px;top:473px;">0.00</div>
<div class="t v" style="right:18.0px;top:473px;">0.00</div>
<svg style="left:9.6px;top:500px" width="16" height="4" viewBox="0 0 16 4"><g fill="#1c1c1c"><circle cx="2.3" cy="2" r="1.75"/><circle cx="8" cy="2" r="1.75"/><circle cx="13.7" cy="2" r="1.75"/></g></svg>
<div class="t v" style="left:39.7px;top:496px;">LSG</div>
<div class="t v" style="left:99.7px;top:496px;">MT</div>
<div class="t v" style="left:159.7px;top:496px;">L</div>
<div class="t v" style="right:918.2px;top:496px;">0.00</div>
<div class="t v" style="right:828.2px;top:496px;">0.00</div>
<div class="t v" style="right:753.2px;top:496px;">2.50</div>
<div class="t v" style="right:678.2px;top:496px;">2.50</div>
<div class="t v" style="right:603.0px;top:496px;">1.50</div>
<div class="t v" style="right:528.3px;top:496px;">0.00</div>
<div class="t v" style="right:468.1px;top:496px;">0.00</div>
<div class="t v" style="right:408.0px;top:496px;">0.00</div>
<div class="t v" style="right:333.1px;top:496px;">0.00</div>
<div class="t v" style="right:273.0px;top:496px;">0.00</div>
<div class="t v" style="right:213.1px;top:496px;">0.00</div>
<div class="t v" style="right:138.2px;top:496px;">0.00</div>
<div class="t v" style="right:78.1px;top:496px;">0.00</div>
<div class="t v" style="right:18.0px;top:496px;">0.00</div>
<div class="t lnk" style="left:615px;top:518px;">Add New Row</div>
<div style="left:0;top:536px;width:1186px;height:21px;background:#f1f1f1"></div>
<div style="left:20.7px;top:538px;width:1140.5px;height:17px;background:#c1c1c1"></div>
<svg style="left:8px;top:542px" width="5" height="9" viewBox="0 0 5 9"><path d="M5 0V9L0 4.5Z" fill="#a3a3a3"/></svg>
<div style="left:0;top:557px;width:1186px;height:8px;background:#e8e8f1;border-top:1px solid #c6cedb;"></div>
<div class="t h2" style="left:13px;top:575px;letter-spacing:1.25px">Speed Consumption Table (Per Day)</div>
<div style="left:0;top:602px;width:1186px;height:22px;background:#e8e8f1;border-top:1px solid #c9d0db;border-bottom:1px solid #c9d0db"></div>
<div style="left:59.4px;top:603px;width:1px;height:20px;background:#c9d0db"></div>
<div style="left:158.3px;top:603px;width:1px;height:20px;background:#c9d0db"></div>
<div style="left:233.4px;top:603px;width:1px;height:20px;background:#c9d0db"></div>
<div style="left:407.4px;top:603px;width:1px;height:20px;background:#c9d0db"></div>
<div style="left:555.5px;top:603px;width:1px;height:20px;background:#c9d0db"></div>
<div style="left:704.3px;top:603px;width:1px;height:20px;background:#c9d0db"></div>
<div style="left:853.4px;top:603px;width:1px;height:20px;background:#c9d0db"></div>
<div style="left:1002.5px;top:603px;width:1px;height:20px;background:#c9d0db"></div>
<div style="left:1274px;top:603px;width:1px;height:20px;background:#c9d0db"></div>
<div style="left:0;top:647px;width:1186px;height:22px;background:#e8eff2"></div>
<div class="t th" style="right:1037.1px;top:605px;">Speed</div>
<div class="t th" style="left:163.2px;top:605px;">B/L</div>
<div class="t th" style="right:788.0px;top:605px;">Engine Load</div>
<div class="t th" style="right:639.9px;top:605px;">IFO</div>
<div class="t th" style="right:491.1px;top:605px;">LSO</div>
<div class="t th" style="right:342.0px;top:605px;">MGO</div>
<div class="t th" style="right:192.9px;top:605px;">LSG</div>
<div class="t th" style="left:1007.4px;top:605px;">Type</div>
<svg style="left:21.4px;top:633.6px" width="16" height="4" viewBox="0 0 16 4"><g fill="#1c1c1c"><circle cx="2.3" cy="2" r="1.75"/><circle cx="8" cy="2" r="1.75"/><circle cx="13.7" cy="2" r="1.75"/></g></svg>
<div class="t v" style="right:1035.9px;top:629px;">12.00</div>
<div class="t v" style="left:162.4px;top:629px;">B</div>
<div class="t v" style="right:786.8px;top:629px;">0.00</div>
<div class="t v" style="right:638.7px;top:629px;">21.00</div>
<div class="t v" style="right:489.9px;top:629px;">21.00</div>
<div class="t v" style="right:340.8px;top:629px;">1.50</div>
<div class="t v" style="right:191.7px;top:629px;">1.50</div>
<svg style="left:21.4px;top:656.6px" width="16" height="4" viewBox="0 0 16 4"><g fill="#1c1c1c"><circle cx="2.3" cy="2" r="1.75"/><circle cx="8" cy="2" r="1.75"/><circle cx="13.7" cy="2" r="1.75"/></g></svg>
<div class="t v" style="right:1035.9px;top:652px;">16.00</div>
<div class="t v" style="left:162.4px;top:652px;">L</div>
<div class="t v" style="right:786.8px;top:652px;">0.00</div>
<div class="t v" style="right:638.7px;top:652px;">22.00</div>
<div class="t v" style="right:489.9px;top:652px;">22.00</div>
<div class="t v" style="right:340.8px;top:652px;">1.50</div>
<div class="t v" style="right:191.7px;top:652px;">1.50</div>
<div class="t lnk" style="left:578px;top:674px;">Add New Row</div>
<div style="left:0;top:758px;width:1186px;height:10px;background:#e8e8f1;border-top:1px solid #c6cedb;border-bottom:1px solid #d0d6e0"></div>
<div class="t h2" style="left:13px;top:777px;letter-spacing:1.28px">Variables and Safety Margins</div>
</div>
<div style="left:1186px;top:87px;width:21px;height:745px;background:#f1f1f1"></div>
<div style="left:1188px;top:108px;width:17px;height:562.7px;background:#c1c1c1"></div>
<svg style="left:1192px;top:96px" width="9" height="5" viewBox="0 0 9 5"><path d="M0 5H9L4.5 0Z" fill="#a3a3a3"/></svg>
<svg style="left:1192px;top:817.5px" width="9" height="5" viewBox="0 0 9 5"><path d="M0 0H9L4.5 5Z" fill="#505050"/></svg>
<div style="left:0;top:832px;width:1207px;height:21px;background:#f1f1f1"></div>
<div style="left:1186px;top:832px;width:21px;height:21px;background:#dcdcdc"></div>
<div style="left:21px;top:834px;width:1084.4px;height:17px;background:#c1c1c1"></div>
<svg style="left:8px;top:838px" width="5" height="9" viewBox="0 0 5 9"><path d="M5 0V9L0 4.5Z" fill="#a3a3a3"/></svg>
<svg style="left:1173.5px;top:838px" width="5" height="9" viewBox="0 0 5 9"><path d="M0 0V9L5 4.5Z" fill="#505050"/></svg>
<div style="left:1208px;top:50px;width:1px;height:803px;background:#d3d9e3"></div>
<!--/LEFT-->
<!--RIGHT-->
<div id="rp" style="left:1209px;top:50px;width:461px;height:803px;overflow:hidden;background:#fff">
<div style="left:0;top:677px;width:36.7px;height:130px;background:#e8e8f1"></div>
<div style="left:261.8px;top:677px;width:199.2px;height:130px;background:#e8e8f1"></div>
<div class="t h3" style="left:12.6px;top:7.5px;letter-spacing:.38px">Properties</div>
<div id="rpv" style="left:0;top:37px;width:461px;height:766px;overflow:hidden">
<div style="left:42px;top:-13.8px;width:16px;height:16px;border-radius:2.5px;border:1px solid #767676;background:#fff"></div>
<div class="t" style="right:269.7px;top:-12.8px">Inactive for Trading</div>
<div style="left:42px;top:15px;width:16px;height:16px;border-radius:2.5px;border:1px solid #767676;background:#fff"></div>
<div class="t " style="left:62.3px;top:16px;">Estimate Only Vessel</div>
<div style="left:42px;top:44px;width:16px;height:16px;border-radius:2.5px;background:#0b72f5"></div>
<svg style="left:42px;top:44px" width="16" height="16" viewBox="0 0 16 16"><path d="M3.3 8.4L6.5 11.4L12.7 4.4" stroke="#fff" stroke-width="2.4" fill="none"/></svg>
<div class="t " style="left:62.3px;top:45px;">Active for Veslink</div>
<div style="left:42px;top:72px;width:16px;height:16px;border-radius:2.5px;border:1px solid #767676;background:#fff"></div>
<div class="t " style="left:62.3px;top:73px;">Vessel Rejected</div>
<div style="left:42px;top:101px;width:16px;height:16px;border-radius:2.5px;border:1px solid #767676;background:#fff"></div>
<div class="t " style="left:62.3px;top:102px;">Offshore Barge</div>
<div style="left:42px;top:130px;width:16px;height:16px;border-radius:2.5px;border:1px solid #767676;background:#fff"></div>
<div class="t " style="left:62.3px;top:131px;">Use Scrubbers</div>
<div class="t " style="left:40.2px;top:197px;">Veslink Company</div>
<div style="left:205px;top:219px;width:213.5px;height:1px;background:#c9d0db"></div>
<div class="t " style="left:40.2px;top:226px;">Company</div>
<div style="left:205px;top:248px;width:213.5px;height:1px;background:#c9d0db"></div>
<div class="t " style="left:40.2px;top:255px;">Reference No.</div>
<div style="left:205px;top:277px;width:213.5px;height:1px;background:#c9d0db"></div>
<div class="t " style="left:40.2px;top:283px;">Alerts</div>
<div style="left:205px;top:305px;width:213.5px;height:1px;background:#c9d0db"></div>
<div class="t " style="left:40.2px;top:312px;">Fuel Zone Set</div>
<div style="left:205px;top:334px;width:213.5px;height:1px;background:#c9d0db"></div>
<div class="t " style="left:40.2px;top:341px;">Inherit Route</div>
<div class="t " style="left:40.2px;top:369px;">Preferences From</div>
<div style="left:205px;top:391px;width:213.5px;height:1px;background:#c9d0db"></div>
<div class="t h3" style="left:29.1px;top:414.6px;letter-spacing:.2px">DWT/Draft</div>
<div class="t " style="left:40.2px;top:464px;">Fresh Water Allowance</div>
<div style="left:205px;top:486px;width:213.5px;height:1px;background:#c9d0db"></div>
<div style="left:364.3px;top:458px;width:1px;height:28px;background:#c9d0db"></div>
<div class="t v" style="right:103.8px;top:464px">0.000</div>
<div class="t v" style="left:366.3px;top:464px;">mm</div>
<div class="t " style="left:40.2px;top:493px;">Max Air Draft</div>
<div style="left:205px;top:514px;width:213.5px;height:1px;background:#c9d0db"></div>
<div style="left:364.3px;top:487px;width:1px;height:28px;background:#c9d0db"></div>
<div class="t v" style="right:103.8px;top:493px">0.00</div>
<div class="t v" style="left:366.3px;top:493px;">m</div>
<div class="t h3" style="left:29.1px;top:537.6px;letter-spacing:.4px">Details</div>
<div style="left:42px;top:586px;width:16px;height:16px;border-radius:2.5px;border:1px solid #767676;background:#fff"></div>
<div class="t " style="left:62.3px;top:587px;">CO2 fitted</div>
<div style="left:42px;top:615px;width:16px;height:16px;border-radius:2.5px;border:1px solid #767676;background:#fff"></div>
<div class="t " style="left:62.3px;top:616px;">Strengthened for Heavy Cargoes</div>
<div style="left:42px;top:643.5px;width:16px;height:16px;border-radius:2.5px;border:1px solid #767676;background:#fff"></div>
<div class="t " style="left:62.3px;top:644px;">TVE Valid</div>
<div style="left:42px;top:672px;width:16px;height:16px;border-radius:2.5px;border:1px solid #767676;background:#fff"></div>
<div class="t " style="left:62.3px;top:673px;">Period Bunker Tracking</div>
<div style="left:42px;top:701px;width:16px;height:16px;border-radius:2.5px;border:1px solid #767676;background:#fff"></div>
<div class="t " style="left:62.3px;top:702px;">Bowthruster</div>
<div style="left:42px;top:730px;width:16px;height:16px;border-radius:2.5px;border:1px solid #767676;background:#fff"></div>
<div class="t " style="left:62.3px;top:731px;">Australian Ladders</div>
<div style="left:42px;top:759px;width:16px;height:16px;border-radius:2.5px;border:1px solid #767676;background:#fff"></div>
<div class="t " style="left:62.3px;top:760px;">Talada Suitable</div>
</div>
</div>
<div style="left:1670px;top:87px;width:21px;height:766px;background:#f1f1f1"></div>
<div style="left:1672px;top:193.3px;width:17px;height:517.6px;background:#c1c1c1"></div>
<svg style="left:1676px;top:96px" width="9" height="5" viewBox="0 0 9 5"><path d="M0 5H9L4.5 0Z" fill="#505050"/></svg>
<svg style="left:1676px;top:838.5px" width="9" height="5" viewBox="0 0 9 5"><path d="M0 0H9L4.5 5Z" fill="#505050"/></svg>
<!--/RIGHT-->
  <div id="mright"></div>
<!--MISC-->
<!-- title bar icons -->
<svg style="left:1535.8px;top:18.4px" width="10.6" height="9.8" viewBox="0 0 12 11"><path d="M5 2.8H1V10.2H8.6V6.4" stroke="#e6e6e6" stroke-width="1.5" fill="none"/><path d="M4.6 6.6L10.6 0.9M6.6 0.8H10.9V5" stroke="#e6e6e6" stroke-width="1.5" fill="none"/></svg>
<div style="left:1595px;top:24px;width:10px;height:3px;background:#f2f2f2;border-radius:1px"></div>
<div style="left:1652.5px;top:20.5px;width:10.5px;height:10.5px;border:1.4px solid #f2f2f2"></div>
<svg style="left:1711px;top:21px" width="12" height="12" viewBox="0 0 12 12"><path d="M1 1L11 11M11 1L1 11" stroke="#fff" stroke-width="3.2" stroke-linecap="butt" fill="none"/></svg>
<!-- right strip icons -->
<svg style="left:1709.5px;top:68.5px" width="15" height="14" viewBox="0 0 15 14"><path d="M7 0.5L1 7L7 13.5M13.8 0.5L7.8 7L13.8 13.5" stroke="#f0f3f5" stroke-width="1.5" fill="none"/></svg>
<svg style="left:1705px;top:113px" width="25" height="25" viewBox="0 0 25 25"><path d="M2.5 3V21.5H10M2.5 8.5H10M2.5 15H15M15 15V21.5H21" stroke="#cfd8de" stroke-width="1" fill="none"/><g fill="#eef1f3"><rect x="0" y="0" width="5" height="5"/><rect x="8" y="6" width="5" height="5"/><rect x="13" y="12.3" width="5" height="5"/><rect x="8" y="19" width="5" height="5"/><rect x="19" y="19" width="5" height="5"/></g></svg>
<div style="left:1691px;top:150px;width:50px;height:50px;background:#1a4062"></div>
<svg style="left:1705px;top:163px" width="24" height="24" viewBox="-12 -12 24 24"><g fill="#eef1f3"><circle r="8.6"/><rect x="-2.6" y="-12" width="5.2" height="5" rx="0.6"/><rect transform="rotate(45)" x="-2.6" y="-12" width="5.2" height="5" rx="0.6"/><rect transform="rotate(90)" x="-2.6" y="-12" width="5.2" height="5" rx="0.6"/><rect transform="rotate(135)" x="-2.6" y="-12" width="5.2" height="5" rx="0.6"/><rect transform="rotate(180)" x="-2.6" y="-12" width="5.2" height="5" rx="0.6"/><rect transform="rotate(225)" x="-2.6" y="-12" width="5.2" height="5" rx="0.6"/><rect transform="rotate(270)" x="-2.6" y="-12" width="5.2" height="5" rx="0.6"/><rect transform="rotate(315)" x="-2.6" y="-12" width="5.2" height="5" rx="0.6"/></g><circle r="3.7" fill="#1a4062"/></svg>
<!-- green arrows -->
<svg style="left:1140px;top:385px;filter:drop-shadow(2px 3.5px 2px rgba(0,0,0,.42))" width="120" height="40" viewBox="1266 474 120 40"><path d="M1277.5 494.4H1361" stroke="#05ae8e" stroke-width="5.2" stroke-linecap="round" fill="none"/><path d="M1359.3 486.9L1374.4 494.4L1359.3 501.9Z" fill="#05ae8e"/></svg>
<svg style="left:94px;top:556px;filter:drop-shadow(2px 3.5px 2px rgba(0,0,0,.42))" width="40" height="70" viewBox="220 645 40 70"><path d="M239.1 665L240.5 707.1" stroke="#05ae8e" stroke-width="5.2" stroke-linecap="round" fill="none"/><path d="M231.6 666.3L238.5 651.7L246.4 666.3Z" fill="#05ae8e"/></svg>

<!--/MISC-->
</div>

<!-- ===== outer scrollbars ===== -->
<div id="vsb">
  <div style="left:0.4px;top:21.2px;width:18.5px;height:832.5px;background:#cdcdcd"></div>
  <svg style="left:3.95px;top:6.3px" width="11" height="8" viewBox="0 0 11 8"><path d="M1.2 6.9L5.5 2.3L9.8 6.9" stroke="#555" stroke-width="2.1" fill="none"/></svg>
  <svg style="left:3.95px;top:955.7px" width="11" height="8" viewBox="0 0 11 8"><path d="M1.2 1.1L5.5 5.7L9.8 1.1" stroke="#555" stroke-width="2.1" fill="none"/></svg>
</div>
<div id="hsb">
  <div style="left:21px;top:0.1px;width:1826.8px;height:18.6px;background:#cdcdcd"></div>
  <svg style="left:5.1px;top:4.2px" width="8" height="11" viewBox="0 0 8 11"><path d="M6.9 1.2L2.3 5.5L6.9 9.8" stroke="#555" stroke-width="2.1" fill="none"/></svg>
  <svg style="left:1879.8px;top:4.2px" width="8" height="11" viewBox="0 0 8 11"><path d="M1.1 1.2L5.7 5.5L1.1 9.8" stroke="#555" stroke-width="2.1" fill="none"/></svg>
  <div style="left:1894px;top:-1px;width:21px;height:21px;background:#f0f0f0"></div>
  <svg style="left:1900px;top:6.3px" width="13" height="13" viewBox="0 0 13 13"><g fill="#b9b9b9"><rect x="9.2" y="0.8" width="2.9" height="2.9"/><rect x="5.1" y="4.8" width="2.9" height="2.9"/><rect x="9.2" y="4.8" width="2.9" height="2.9"/><rect x="1.1" y="8.9" width="2.9" height="2.9"/><rect x="5.1" y="8.9" width="2.9" height="2.9"/><rect x="9.2" y="8.9" width="2.9" height="2.9"/></g></svg>
</div>

</div>
</body>
</html>
